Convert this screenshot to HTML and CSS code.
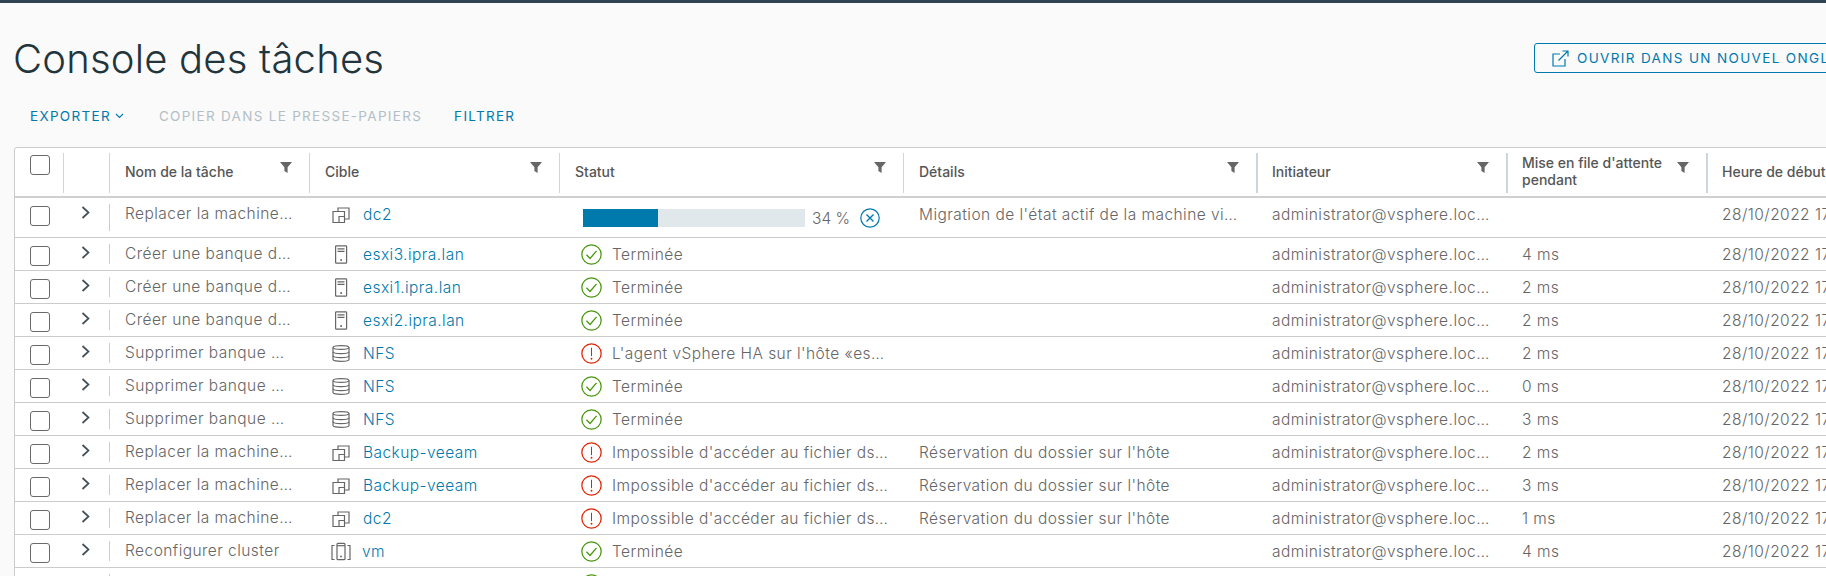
FILE: index.html
```html
<!DOCTYPE html>
<html lang="fr">
<head>
    <meta charset="UTF-8">
    <title>Console des tâches</title>
    <link rel="stylesheet" href="styles.css">
</head>
<body>
    <svg class="defs" width="0" height="0">
        <symbol id="i-filter" viewBox="0 0 12 11"><path d="M0 0h12L7.600 5.200V11L4.400 9V5.200z"/></symbol>
        <symbol id="i-chevron" viewBox="0 0 9 13"><path d="M1.500 1l6 5.500-6 5.500" fill="none" stroke="#454f58" stroke-width="1.700"/></symbol>
        <symbol id="i-vms" viewBox="0 0 18 19"><g fill="none" stroke="#666" stroke-width="1.200"><path d="M6 6V3h11v11h-4.500"/><path d="M1 6.500h11.500V17.500H1z"/><path d="M7 17.500v-6h5.500"/></g></symbol>
        <symbol id="i-host" viewBox="0 0 18 19"><g fill="none" stroke="#666" stroke-width="1.200"><rect x="3.600" y=".8" width="11" height="17.400" rx=".8"/><path d="M5.500 3.800h7M5.500 6.300h7"/></g><circle cx="9.100" cy="15" r="1" fill="#666"/></symbol>
        <symbol id="i-store" viewBox="0 0 18 19"><g fill="none" stroke="#666" stroke-width="1.200"><path d="M1 3.500C1 1 17 1 17 3.500V15.500c0 2.500-16 2.500-16 0z"/><path d="M1 3.500c0 2.500 16 2.500 16 0M1 7.700c0 2.500 16 2.500 16 0M1 11.700c0 2.500 16 2.500 16 0"/></g></symbol>
        <symbol id="i-vm" viewBox="0 0 20 18"><g fill="none" stroke="#666" stroke-width="1.200"><path d="M3.500 3H1v14h2.500M16.500 3H19v14h-2.500"/><rect x="6" y=".8" width="8" height="16.400" rx="1"/><path d="M6 3.200h8"/></g><circle cx="10" cy="14" r=".9" fill="#666"/></symbol>
        <symbol id="i-ok" viewBox="0 0 20 20"><g fill="none" stroke="#48960c" stroke-width="1.200"><circle cx="10" cy="10" r="9.200"/><path d="M5.200 10.200l3.400 3.600 6.200-7.200"/></g></symbol>
        <symbol id="i-err" viewBox="0 0 20 20"><circle cx="10" cy="10" r="9.200" fill="none" stroke="#e12200" stroke-width="1.200"/><path d="M10 4.500v8" stroke="#e12200" stroke-width="1"/><circle cx="10" cy="15" r=".9" fill="#e12200"/></symbol>
        <symbol id="i-cancel" viewBox="0 0 20 20"><g fill="none" stroke="#0079ad" stroke-width="1.200"><circle cx="10" cy="10" r="9.200"/><path d="M6.500 6.500l7 7M13.500 6.500l-7 7" stroke-width="1.400"/></g></symbol>
        <symbol id="i-popout" viewBox="0 0 17 17"><g fill="none" stroke="#0079ad" stroke-width="1.200"><path d="M13 9v7H1V4h7"/><path d="M6.500 10.500L16 1M10.500 1H16v5.500"/></g></symbol>
        <symbol id="i-caret" viewBox="0 0 9 6"><path d="M1 1l3.500 3.500L8 1" fill="none" stroke="#0079ad" stroke-width="1.100"/></symbol>
    </svg>

    <div class="topbar"></div>

    <header class="page-head">
        <h1>Console des tâches</h1>
        <button class="btn-open" type="button"><svg class="ic-popout"><use href="#i-popout"/></svg>OUVRIR DANS UN NOUVEL ONGLET</button>
    </header>

    <nav class="toolbar">
        <a class="tool tool-export">EXPORTER<svg class="ic-caret"><use href="#i-caret"/></svg></a>
        <a class="tool tool-off">COPIER DANS LE PRESSE-PAPIERS</a>
        <a class="tool">FILTRER</a>
    </nav>

    <section class="grid">
        <div class="head">
            <div class="hd hd-check"><span class="check"></span></div>
            <div class="hd hd-exp"></div>
            <div class="hd c-name">Nom de la tâche<svg class="filter"><use href="#i-filter"/></svg></div>
            <div class="hd c-target">Cible<svg class="filter"><use href="#i-filter"/></svg></div>
            <div class="hd c-status">Statut<svg class="filter"><use href="#i-filter"/></svg></div>
            <div class="hd c-detail">Détails<svg class="filter"><use href="#i-filter"/></svg></div>
            <div class="hd hd-thick c-init">Initiateur<svg class="filter"><use href="#i-filter"/></svg></div>
            <div class="hd hd-thick c-queue"><span>Mise en file d'attente pendant</span><svg class="filter"><use href="#i-filter"/></svg></div>
            <div class="hd hd-thick c-start">Heure de début</div>
        </div>

        <div class="row row-tall">
            <span class="check"></span><svg class="chevron"><use href="#i-chevron"/></svg>
            <div class="cell c-name name-sep">Replacer la machine…</div>
            <div class="cell c-target"><svg class="ic-target"><use href="#i-vms"/></svg><a>dc2</a></div>
            <div class="cell c-status progress-cell">
                <div class="bar"><div class="bar-fill" style="width: 34%"></div></div>
                <span class="pct">34 %</span>
                <svg class="ic-cancel"><use href="#i-cancel"/></svg>
            </div>
            <div class="cell c-detail">Migration de l'état actif de la machine vi…</div>
            <div class="cell c-init">administrator@vsphere.loc…</div>
            <div class="cell c-queue"></div>
            <div class="cell c-start">28/10/2022 17:</div>
        </div>

        <div class="row">
            <span class="check"></span><svg class="chevron"><use href="#i-chevron"/></svg>
            <div class="cell c-name name-sep">Créer une banque d…</div>
            <div class="cell c-target"><svg class="ic-target"><use href="#i-host"/></svg><a>esxi3.ipra.lan</a></div>
            <div class="cell c-status"><svg class="ic-status"><use href="#i-ok"/></svg>Terminée</div>
            <div class="cell c-detail"></div>
            <div class="cell c-init">administrator@vsphere.loc…</div>
            <div class="cell c-queue">4 ms</div>
            <div class="cell c-start">28/10/2022 17:</div>
        </div>

        <div class="row">
            <span class="check"></span><svg class="chevron"><use href="#i-chevron"/></svg>
            <div class="cell c-name name-sep">Créer une banque d…</div>
            <div class="cell c-target"><svg class="ic-target"><use href="#i-host"/></svg><a>esxi1.ipra.lan</a></div>
            <div class="cell c-status"><svg class="ic-status"><use href="#i-ok"/></svg>Terminée</div>
            <div class="cell c-detail"></div>
            <div class="cell c-init">administrator@vsphere.loc…</div>
            <div class="cell c-queue">2 ms</div>
            <div class="cell c-start">28/10/2022 17:</div>
        </div>

        <div class="row">
            <span class="check"></span><svg class="chevron"><use href="#i-chevron"/></svg>
            <div class="cell c-name name-sep">Créer une banque d…</div>
            <div class="cell c-target"><svg class="ic-target"><use href="#i-host"/></svg><a>esxi2.ipra.lan</a></div>
            <div class="cell c-status"><svg class="ic-status"><use href="#i-ok"/></svg>Terminée</div>
            <div class="cell c-detail"></div>
            <div class="cell c-init">administrator@vsphere.loc…</div>
            <div class="cell c-queue">2 ms</div>
            <div class="cell c-start">28/10/2022 17:</div>
        </div>

        <div class="row">
            <span class="check"></span><svg class="chevron"><use href="#i-chevron"/></svg>
            <div class="cell c-name name-sep">Supprimer banque …</div>
            <div class="cell c-target"><svg class="ic-target"><use href="#i-store"/></svg><a>NFS</a></div>
            <div class="cell c-status"><svg class="ic-status"><use href="#i-err"/></svg>L'agent vSphere HA sur l'hôte «es…</div>
            <div class="cell c-detail"></div>
            <div class="cell c-init">administrator@vsphere.loc…</div>
            <div class="cell c-queue">2 ms</div>
            <div class="cell c-start">28/10/2022 17:</div>
        </div>

        <div class="row">
            <span class="check"></span><svg class="chevron"><use href="#i-chevron"/></svg>
            <div class="cell c-name name-sep">Supprimer banque …</div>
            <div class="cell c-target"><svg class="ic-target"><use href="#i-store"/></svg><a>NFS</a></div>
            <div class="cell c-status"><svg class="ic-status"><use href="#i-ok"/></svg>Terminée</div>
            <div class="cell c-detail"></div>
            <div class="cell c-init">administrator@vsphere.loc…</div>
            <div class="cell c-queue">0 ms</div>
            <div class="cell c-start">28/10/2022 17:</div>
        </div>

        <div class="row">
            <span class="check"></span><svg class="chevron"><use href="#i-chevron"/></svg>
            <div class="cell c-name name-sep">Supprimer banque …</div>
            <div class="cell c-target"><svg class="ic-target"><use href="#i-store"/></svg><a>NFS</a></div>
            <div class="cell c-status"><svg class="ic-status"><use href="#i-ok"/></svg>Terminée</div>
            <div class="cell c-detail"></div>
            <div class="cell c-init">administrator@vsphere.loc…</div>
            <div class="cell c-queue">3 ms</div>
            <div class="cell c-start">28/10/2022 17:</div>
        </div>

        <div class="row">
            <span class="check"></span><svg class="chevron"><use href="#i-chevron"/></svg>
            <div class="cell c-name name-sep">Replacer la machine…</div>
            <div class="cell c-target"><svg class="ic-target"><use href="#i-vms"/></svg><a>Backup-veeam</a></div>
            <div class="cell c-status"><svg class="ic-status"><use href="#i-err"/></svg>Impossible d'accéder au fichier ds…</div>
            <div class="cell c-detail">Réservation du dossier sur l'hôte</div>
            <div class="cell c-init">administrator@vsphere.loc…</div>
            <div class="cell c-queue">2 ms</div>
            <div class="cell c-start">28/10/2022 17:</div>
        </div>

        <div class="row">
            <span class="check"></span><svg class="chevron"><use href="#i-chevron"/></svg>
            <div class="cell c-name name-sep">Replacer la machine…</div>
            <div class="cell c-target"><svg class="ic-target"><use href="#i-vms"/></svg><a>Backup-veeam</a></div>
            <div class="cell c-status"><svg class="ic-status"><use href="#i-err"/></svg>Impossible d'accéder au fichier ds…</div>
            <div class="cell c-detail">Réservation du dossier sur l'hôte</div>
            <div class="cell c-init">administrator@vsphere.loc…</div>
            <div class="cell c-queue">3 ms</div>
            <div class="cell c-start">28/10/2022 17:</div>
        </div>

        <div class="row">
            <span class="check"></span><svg class="chevron"><use href="#i-chevron"/></svg>
            <div class="cell c-name name-sep">Replacer la machine…</div>
            <div class="cell c-target"><svg class="ic-target"><use href="#i-vms"/></svg><a>dc2</a></div>
            <div class="cell c-status"><svg class="ic-status"><use href="#i-err"/></svg>Impossible d'accéder au fichier ds…</div>
            <div class="cell c-detail">Réservation du dossier sur l'hôte</div>
            <div class="cell c-init">administrator@vsphere.loc…</div>
            <div class="cell c-queue">1 ms</div>
            <div class="cell c-start">28/10/2022 17:</div>
        </div>

        <div class="row">
            <span class="check"></span><svg class="chevron"><use href="#i-chevron"/></svg>
            <div class="cell c-name name-sep">Reconfigurer cluster</div>
            <div class="cell c-target"><svg class="ic-target ic-target-wide"><use href="#i-vm"/></svg><a>vm</a></div>
            <div class="cell c-status"><svg class="ic-status"><use href="#i-ok"/></svg>Terminée</div>
            <div class="cell c-detail"></div>
            <div class="cell c-init">administrator@vsphere.loc…</div>
            <div class="cell c-queue">4 ms</div>
            <div class="cell c-start">28/10/2022 17:</div>
        </div>

        <div class="row">
            <span class="check"></span><svg class="chevron"><use href="#i-chevron"/></svg>
            <div class="cell c-name name-sep"></div>
            <div class="cell c-target"></div>
            <div class="cell c-status"><svg class="ic-status"><use href="#i-ok"/></svg></div>
        </div>
    </section>
</body>
</html>
```

FILE: styles.css
```css
html, body {
    height: 576px;
    overflow: hidden;
}
body {
    margin: 0;
    background-color: #fafafa;
    color: #666;
    font-family: Inter, "Open Sans", sans-serif;
    font-size: 14px;
}
.defs {
    display: block;
    height: 0;
}
.topbar {
    height: 3px;
    background-color: #2f4353;
}

/* titre + bouton */
.page-head {
    display: flex;
    align-items: center;
    margin-top: 40px;
    height: 30px;
    width: 2200px;
}
h1 {
    flex: none;
    width: 1521px;
    margin: 0 0 0 13px;
    box-sizing: border-box;
    font-size: 40px;
    font-weight: 300;
    letter-spacing: .2px;
    color: #22343c;
}
.btn-open {
    flex: none;
    display: flex;
    align-items: center;
    height: 30px;
    width: 340px;
    padding: 0 0 0 17px;
    border: 1px solid #0079ad;
    border-radius: 3px;
    background: none;
    color: #0079ad;
    font-family: inherit;
    font-size: 13.500px;
    letter-spacing: 1.350px;
    white-space: nowrap;
}
.ic-popout {
    width: 17px;
    height: 17px;
    margin-right: 8px;
}

/* barre d'actions */
.toolbar {
    display: flex;
    align-items: center;
    gap: 32px;
    height: 20px;
    margin-top: 33px;
    padding-left: 30px;
}
.tool {
    color: #0079ad;
    font-size: 13.500px;
    letter-spacing: 1.300px;
    white-space: nowrap;
}
.tool-export {
    display: flex;
    align-items: center;
    margin-right: 3px;
}
.tool-off {
    color: #b3bfc6;
}
.ic-caret {
    width: 9px;
    height: 6px;
    margin-left: 4px;
}

/* tableau */
.grid {
    width: 2200px;
    margin: 21px 0 0 14px;
    border: 1px solid #ccc;
    border-radius: 3px 0 0 0;
    background-color: #fff;
}
.head {
    display: flex;
    align-items: flex-start;
    box-sizing: border-box;
    height: 50px;
    padding-top: 5px;
    border-bottom: 2px solid #d0d0d0;
}
.c-name { width: 200px; }
.c-target { width: 250px; }
.c-status { width: 344px; }
.c-detail { width: 353px; }
.c-init { width: 250px; }
.c-queue { width: 200px; }
.c-start { width: 300px; }

.hd {
    flex: none;
    display: flex;
    align-items: center;
    box-sizing: border-box;
    height: 40px;
    padding: 0 17px 4px 15px;
    border-left: 1px solid #ccd6db;
    font-size: 14px;
    line-height: 17px;
    font-weight: 500;
    color: #565656;
}
.hd-thick {
    border-left-width: 2px;
    padding-left: 14px;
}
.hd-check {
    width: 48px;
    border-left: none;
    padding: 2px 0 0 15px;
    align-items: flex-start;
}
.hd-exp {
    width: 46px;
}
.filter {
    flex: none;
    width: 12px;
    height: 11px;
    margin-left: auto;
    align-self: flex-start;
    margin-top: 9px;
    fill: #666;
}

.row {
    display: flex;
    align-items: flex-start;
    box-sizing: border-box;
    height: 33px;
    border-bottom: 1px solid #ccc;
    font-size: 15.500px;
    font-weight: 350;
    letter-spacing: .45px;
    white-space: nowrap;
}
.row-tall {
    height: 40px;
}
.check {
    flex: none;
    display: block;
    box-sizing: border-box;
    width: 20px;
    height: 20px;
    margin: 8px 0 0 15px;
    border: 1px solid #6a6a6a;
    border-radius: 3px;
    background-color: #fff;
}
.hd-check .check {
    margin: 0;
}
.chevron {
    flex: none;
    width: 9px;
    height: 13px;
    margin: 8px 19px 0 31px;
}
.cell {
    flex: none;
    display: flex;
    align-items: center;
    box-sizing: border-box;
    height: 20px;
    margin-top: 6px;
    padding-left: 16px;
}
.name-sep {
    align-self: stretch;
    height: auto;
    margin: 6px 0;
    padding: 0 0 0 15px;
    border-left: 1px solid #ccc;
    align-items: flex-start;
    line-height: 20px;
}
.cell.c-target {
    padding-left: 23px;
}
.c-target a {
    color: #0079ad;
}
.ic-target {
    flex: none;
    width: 18px;
    height: 19px;
    margin-right: 13px;
}
.ic-target-wide {
    width: 20px;
    margin: 0 11px 0 -1px;
}
.cell.c-status {
    padding-left: 22px;
}
.ic-status {
    flex: none;
    width: 21px;
    height: 21px;
    margin-right: 10px;
}
.cell.progress-cell {
    margin-top: 10px;
    padding-left: 24px;
}
.bar {
    flex: none;
    width: 222px;
    height: 18px;
    background-color: #e1e8ec;
}
.bar-fill {
    height: 100%;
    background-color: #0079ad;
}
.pct {
    margin: 0 10px 0 7px;
    letter-spacing: 0;
}
.ic-cancel {
    flex: none;
    width: 20px;
    height: 20px;
}
```
